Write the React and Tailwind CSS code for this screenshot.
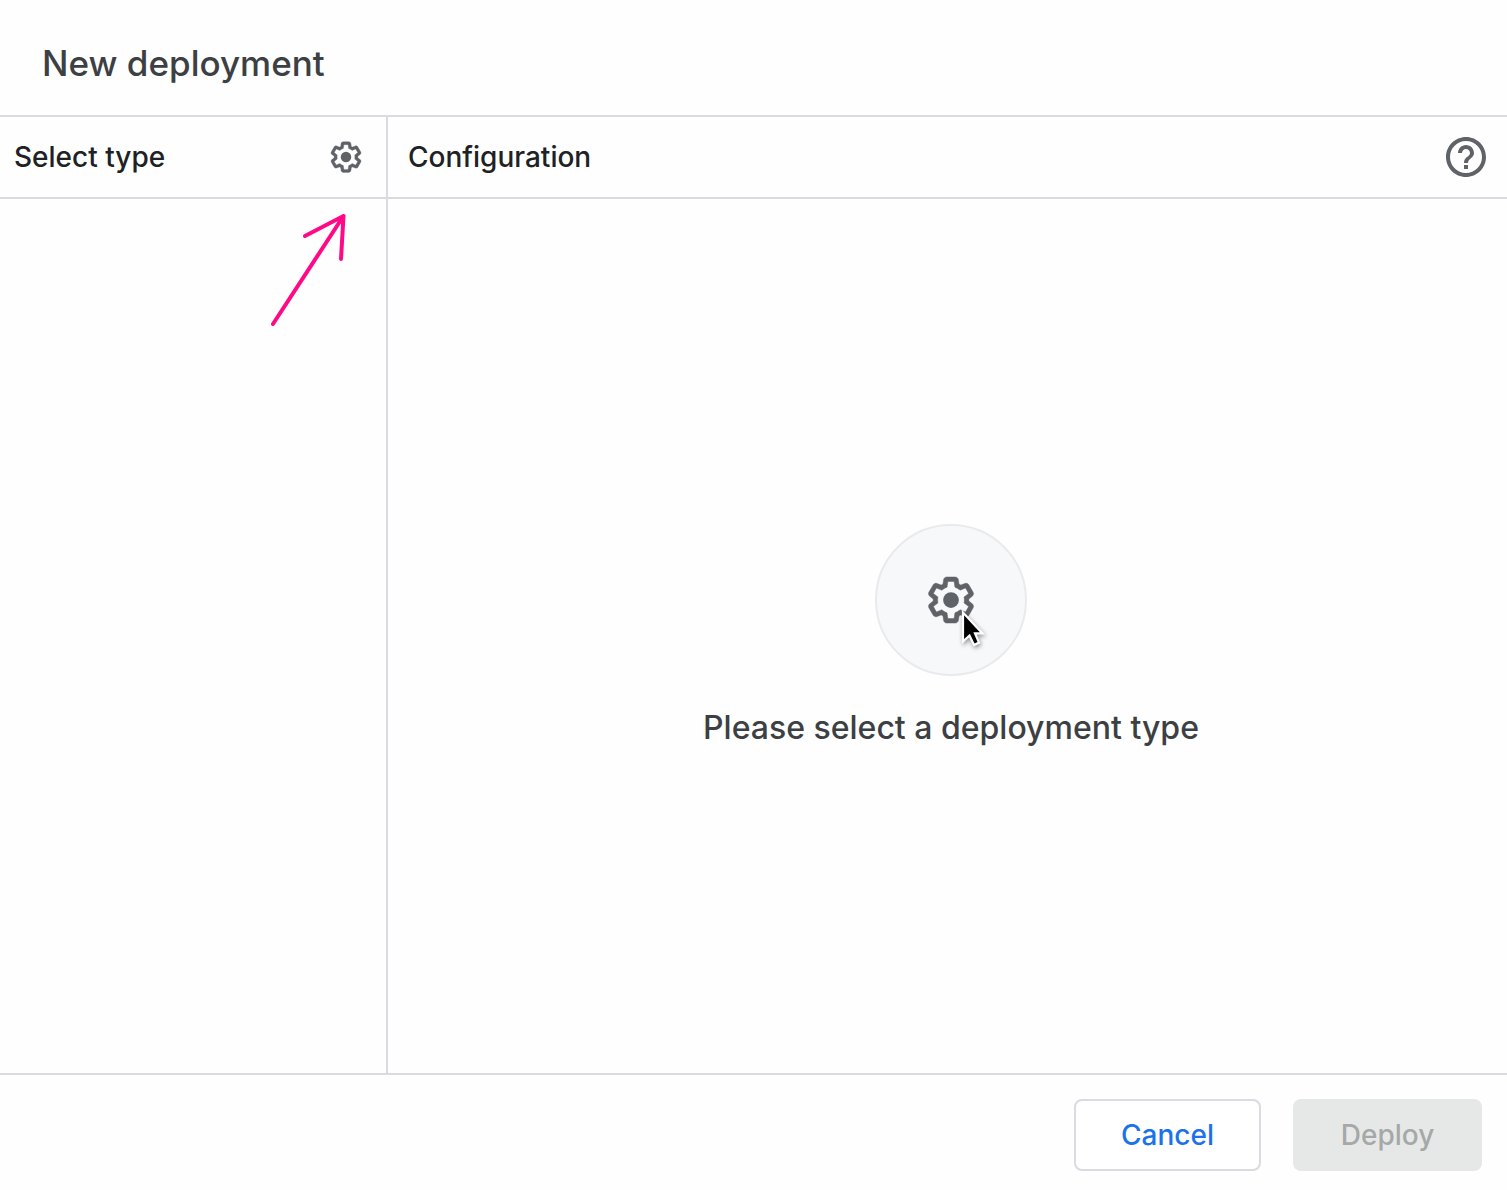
import { memo, useState } from "react";
import { clsx } from "clsx";

const GEAR_PATH =
  "M13.85 22.25h-3.7c-.74 0-1.36-.54-1.45-1.27l-.27-1.89c-.27-.14-.53-.29-.79-.46l-1.8.72c-.7.26-1.47-.03-1.81-.65L2.2 15.53c-.35-.66-.2-1.44.36-1.88l1.53-1.19c-.01-.15-.02-.3-.02-.46 0-.15.01-.31.02-.46l-1.52-1.19c-.59-.45-.74-1.26-.37-1.88l1.85-3.19c.34-.62 1.11-.9 1.79-.63l1.81.73c.26-.17.52-.32.78-.46l.27-1.91c.09-.7.71-1.25 1.44-1.25h3.7c.74 0 1.36.54 1.45 1.27l.27 1.89c.27.14.53.29.79.46l1.8-.72c.71-.26 1.48.03 1.82.65l1.84 3.18c.36.66.2 1.44-.36 1.88l-1.52 1.19c.01.15.02.3.02.46s-.01.31-.02.46l1.52 1.19c.56.45.72 1.23.37 1.86l-1.86 3.22c-.34.62-1.11.9-1.8.63l-1.8-.72c-.26.17-.52.32-.78.46l-.27 1.91c-.1.68-.72 1.22-1.46 1.22zm-3.23-2h2.76l.37-2.55.53-.22c.44-.18.88-.44 1.34-.78l.45-.34 2.38.96 1.38-2.4-2.03-1.58.07-.56c.03-.26.06-.51.06-.78s-.03-.53-.06-.78l-.07-.56 2.03-1.58-1.39-2.4-2.39.96-.45-.35c-.42-.32-.87-.58-1.33-.77l-.52-.22-.37-2.55h-2.76l-.37 2.55-.53.21c-.44.19-.88.44-1.34.79l-.45.33-2.38-.95-1.39 2.39 2.03 1.58-.07.56a7 7 0 0 0-.06.79c0 .26.02.53.06.78l.07.56-2.03 1.58 1.38 2.4 2.39-.96.45.35c.43.33.86.58 1.33.77l.53.22.38 2.55z";

const GearIcon = memo(({ className }) => (
  <svg viewBox="0 0 24 24" fill="currentColor" aria-hidden="true" className={className}>
    <path d={GEAR_PATH} stroke="currentColor" strokeWidth="0.2" />
    <circle cx="12" cy="12" r="3.5" />
  </svg>
));

const HelpIcon = memo(({ className }) => (
  <svg viewBox="0 0 24 24" fill="currentColor" aria-hidden="true" className={className}>
    <path d="M11 18h2v-2h-2v2zm1-16C6.48 2 2 6.48 2 12s4.48 10 10 10 10-4.48 10-10S17.52 2 12 2zm0 18c-4.41 0-8-3.59-8-8s3.59-8 8-8 8 3.59 8 8-3.59 8-8 8zm0-14c-2.21 0-4 1.79-4 4h2c0-1.1.9-2 2-2s2 .9 2 2c0 2-3 1.75-3 5h2c0-2.25 3-2.5 3-5 0-2.21-1.79-4-4-4z" />
  </svg>
));

const HintArrow = memo(({ className }) => (
  <svg
    viewBox="0 0 80 120"
    fill="none"
    stroke="#ff0a86"
    strokeWidth="4"
    strokeLinecap="round"
    strokeLinejoin="round"
    aria-hidden="true"
    className={className}
  >
    <path d="M5 113 L75.5 5 M37 25 L75.5 5 L73 48" />
  </svg>
));

const Pointer = memo(({ className }) => (
  <svg viewBox="0 0 32 44" aria-hidden="true" className={className}>
    <path
      d="M3 4.5 V33.5 L9.5 27.5 L14 37 L19 34.6 L15 25.4 H22.5 Z"
      fill="#000"
      stroke="#fff"
      strokeWidth="2.2"
      strokeLinejoin="miter"
    />
  </svg>
));

const PaneHeader = ({ title, className, children }) => (
  <div className={clsx("flex h-[82px] items-center justify-between border-b-2 border-[#dadae0]", className)}>
    <h2 className="text-[28px] leading-9 text-[#202124]">{title}</h2>
    {children}
  </div>
);

function App() {
  const [type] = useState(null);

  return (
    <div className="flex min-h-screen w-full flex-col bg-[#fefefe] font-[Inter,'Liberation_Sans',sans-serif] font-medium text-[#3c4043]">
      <header className="border-b-2 border-[#dadae0] px-[42px] pt-[41px] pb-[30px]">
        <h1 className="text-[35px] leading-[44px]">New deployment</h1>
      </header>

      <main className="flex flex-1">
        <section className="relative w-[388px] shrink-0 border-r-2 border-[#dadae0]">
          <PaneHeader title="Select type" className="pr-[22px] pl-[14px]">
            <button type="button" aria-label="Select deployment type" className="text-[#5f6368]">
              <GearIcon className="size-9" />
            </button>
          </PaneHeader>
          <HintArrow className="pointer-events-none absolute top-[94px] right-[38px] h-[120px] w-20" />
        </section>

        <section className="flex flex-1 flex-col">
          <PaneHeader title="Configuration" className="pr-[17px] pl-5">
            <button type="button" aria-label="Help" className="text-[#5f6368]">
              <HelpIcon className="size-12" />
            </button>
          </PaneHeader>
          <div className="flex flex-1 flex-col items-center justify-center gap-8 pl-[7px]">
            <div className="relative flex size-[152px] items-center justify-center rounded-full border-2 border-[#e8eaed] bg-[#f7f8fa] text-[#5f6368]">
              <GearIcon className="size-[54px]" />
              <Pointer className="pointer-events-none absolute top-[82px] left-[83px] h-11 w-8 drop-shadow-[1px_2px_2px_rgba(0,0,0,0.4)]" />
            </div>
            <p className="text-[32px] leading-10">Please select a deployment type</p>
          </div>
        </section>
      </main>

      <footer className="flex justify-end gap-8 border-t-2 border-[#dadae0] pt-6 pr-[25px] pb-[19px] text-[28px]">
        <button
          type="button"
          className="h-[72px] w-[187px] rounded-lg border-2 border-[#dadae0] bg-white text-[#1a73e8]"
        >
          Cancel
        </button>
        <button
          type="button"
          disabled={!type}
          className="h-[72px] w-[189px] rounded-lg bg-[#1a73e8] text-white disabled:bg-[#e6e8e7] disabled:text-[#a6a8a8]"
        >
          Deploy
        </button>
      </footer>
    </div>
  );
}

export default App;
